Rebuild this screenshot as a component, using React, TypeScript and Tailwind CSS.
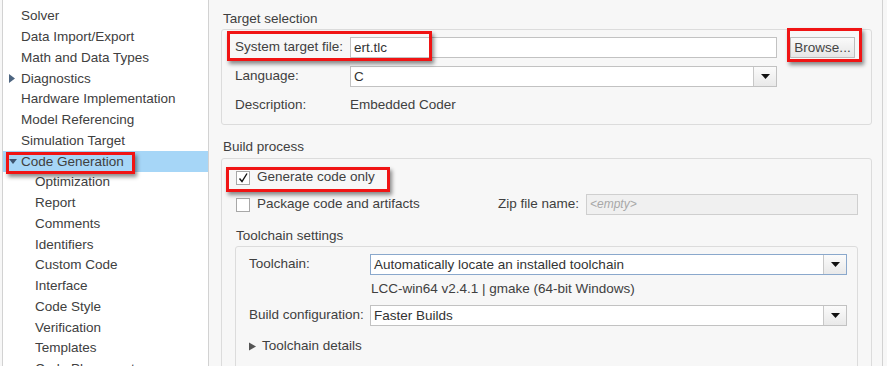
import React from "react";

const Tri = ({ dir, color }: { dir: "down" | "right"; color: string }) =>
  dir === "down" ? (
    <svg width="8" height="6" viewBox="0 0 8 6">
      <polygon points="0,0 8,0 4,5" fill={color} />
    </svg>
  ) : (
    <svg width="6" height="9" viewBox="0 0 6 9">
      <polygon points="0,0 6,4.5 0,9" fill={color} />
    </svg>
  );

const Red = ({ cls }: { cls: string }) => (
  <div
    className={
      "absolute border-[3px] border-[#f01414] shadow-[2px_3px_4px_rgba(0,0,0,0.45)] pointer-events-none " +
      cls
    }
  />
);

const Select = ({ text, w, focus }: { text: string; w: string; focus?: boolean }) => (
  <div
    className={
      "flex h-[21px] bg-white border " +
      w +
      (focus ? " border-[#8aa8cc]" : " border-[#c2c2c2]")
    }
  >
    <div className="flex-1 pl-[3px] leading-[19px] text-[#333]">{text}</div>
    <div className="w-[23px] flex items-center justify-center border-l border-[#c8c8c8] bg-gradient-to-b from-[#fbfbfb] to-[#e9e9e9]">
      <svg width="9" height="5" viewBox="0 0 9 5">
        <polygon points="0,0 9,0 4.5,5" fill="#111" />
      </svg>
    </div>
  </div>
);

const Check = ({ checked }: { checked?: boolean }) => (
  <div className="w-[14px] h-[14px] border border-[#a8a8a8] bg-white flex items-center justify-center">
    {checked && (
      <svg width="12" height="12" viewBox="0 0 12 12">
        <path d="M2.5 6.5 L5 9.5 L10 1.5" stroke="#111" strokeWidth="1.4" fill="none" />
      </svg>
    )}
  </div>
);

export default function App() {
  const top = [
    "Solver",
    "Data Import/Export",
    "Math and Data Types",
    "Diagnostics",
    "Hardware Implementation",
    "Model Referencing",
    "Simulation Target",
  ];
  const kids = [
    "Optimization",
    "Report",
    "Comments",
    "Identifiers",
    "Custom Code",
    "Interface",
    "Code Style",
    "Verification",
    "Templates",
    "Code Placement",
  ];
  return (
    <div
      className="w-[887px] h-[366px] overflow-hidden flex bg-[#f7f7f7] pl-[2px] text-[13.5px] text-[#404040]"
      style={{ fontFamily: '"Liberation Sans", Arial, sans-serif' }}
    >
      {/* Left tree */}
      <div className="w-[207px] h-full bg-white border-l border-r border-[#d2d2d2] pt-[6px] shrink-0">
        {top.map((t) => (
          <div key={t} className="h-[20.75px] flex items-center pl-[6px]">
            <div className="w-[12px] flex items-center">
              {t === "Diagnostics" && <Tri dir="right" color="#4d6580" />}
            </div>
            <span className="leading-[20px] whitespace-nowrap">{t}</span>
          </div>
        ))}
        <div className="relative h-[20.75px] flex items-center pl-[6px] bg-[#a6d6f7]">
          <div className="w-[12px] flex items-center">
            <Tri dir="down" color="#3d5570" />
          </div>
          <span className="leading-[20px] whitespace-nowrap">Code Generation</span>
          <Red cls="left-[3px] top-[1px] w-[129px] h-[22px]" />
        </div>
        {kids.map((t) => (
          <div key={t} className="h-[20.75px] flex items-center pl-[32px]">
            <span className="leading-[20px] whitespace-nowrap">{t}</span>
          </div>
        ))}
      </div>

      {/* Right pane */}
      <div className="w-[674px] h-full border-r border-[#d2d2d2] pl-[12px] pr-[10px] shrink-0">
        <div className="h-[21px] leading-[21px] mt-[8px] pl-[2px]">Target selection</div>
        <div className="border border-[#dcdcdc] rounded-[3px] pt-[7px] pb-[8px] pl-[13px]">
          <div className="relative flex items-center h-[21px]">
            <div className="w-[115px] whitespace-nowrap">System target file:</div>
            <div className="w-[427px] h-[21px] bg-white border border-[#c2c2c2] pl-[3px] leading-[19px] text-[#333]">
              ert.tlc
            </div>
            <div className="relative ml-[13px]">
              <div className="w-[65px] h-[21px] border border-[#bdbdbd] bg-gradient-to-b from-[#fafafa] to-[#e6e6e6] text-center leading-[19px] text-[#444]">
                Browse...
              </div>
              <Red cls="left-[-3px] top-[-9px] w-[75px] h-[34px]" />
            </div>
            <Red cls="left-[-8px] top-[-6px] w-[205px] h-[30px]" />
          </div>
          <div className="flex items-center h-[21px] mt-[8px]">
            <div className="w-[115px]">Language:</div>
            <Select text="C" w="w-[427px]" />
          </div>
          <div className="flex items-center h-[21px] mt-[8px]">
            <div className="w-[115px]">Description:</div>
            <div>Embedded Coder</div>
          </div>
        </div>

        <div className="h-[21px] leading-[21px] mt-[11px] pl-[2px]">Build process</div>
        <div className="border border-[#dcdcdc] rounded-[3px] mt-[1px] pt-[8px] pb-[20px] pl-[14px] pr-[13px]">
          <div className="relative flex items-center h-[21px]">
            <Check checked />
            <span className="ml-[7px]">Generate code only</span>
            <Red cls="left-[-10px] top-[0px] w-[164px] h-[25px]" />
          </div>
          <div className="flex items-center h-[21px] mt-[6px]">
            <div className="w-[262px] flex items-center">
              <Check />
              <span className="ml-[7px]">Package code and artifacts</span>
            </div>
            <div className="w-[88px] whitespace-nowrap">Zip file name:</div>
            <div className="w-[272px] h-[21px] bg-[#f0f0f0] border border-[#cfcfcf] pl-[3px] leading-[19px] italic text-[12px] text-[#a8a8a8]">
              &lt;empty&gt;
            </div>
          </div>
          <div className="h-[21px] leading-[21px] mt-[10px]">Toolchain settings</div>
          <div className="ml-[-1px] border border-[#dcdcdc] rounded-[3px] pt-[7px] pb-[20px] pl-[13px]">
            <div className="flex items-center h-[21px]">
              <div className="w-[121px]">Toolchain:</div>
              <Select text="Automatically locate an installed toolchain" w="w-[477px]" focus />
            </div>
            <div className="flex items-center h-[21px] mt-[4px]">
              <div className="w-[122px]" />
              <div>LCC-win64 v2.4.1 | gmake (64-bit Windows)</div>
            </div>
            <div className="flex items-center h-[21px] mt-[5px]">
              <div className="w-[121px] whitespace-nowrap">Build configuration:</div>
              <Select text="Faster Builds" w="w-[477px]" />
            </div>
            <div className="flex items-center h-[21px] mt-[10px]">
              <div className="w-[13px] flex items-center">
                <svg width="7" height="9" viewBox="0 0 7 9">
                  <polygon points="0,0.5 7,4.5 0,8.5" fill="#555" />
                </svg>
              </div>
              <span>Toolchain details</span>
            </div>
          </div>
        </div>
      </div>
    </div>
  );
}
